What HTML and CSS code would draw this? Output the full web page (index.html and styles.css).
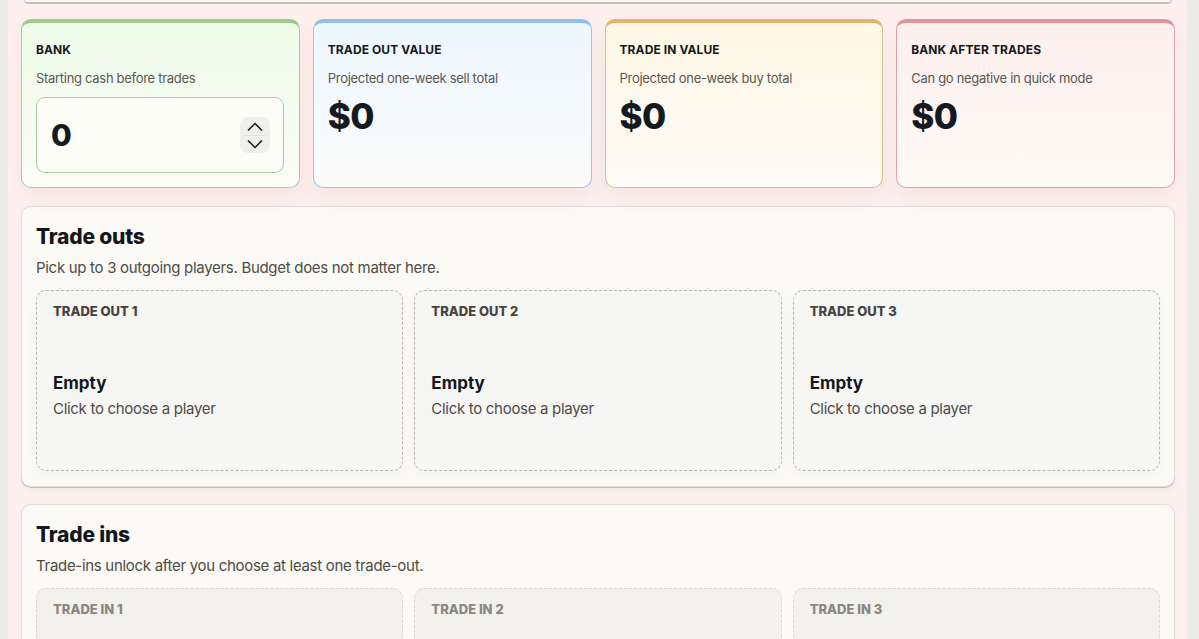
FILE: index.html
```html
<!DOCTYPE html>
<html lang="en">
<head>
<meta charset="utf-8">
<title>Trade planner</title>
<link rel="stylesheet" href="styles.css">
</head>
<body>
<div class="page">
  <div class="prev-card"></div>

  <div class="stats">
    <div class="stat stat-bank">
      <div class="stat-title">BANK</div>
      <div class="stat-sub">Starting cash before trades</div>
      <div class="bank-input">
        <span class="bank-value">0</span>
        <span class="spinner">
          <svg width="16" height="9" viewBox="0 0 16 9"><path d="M1.5 8 L8 1.5 L14.5 8" fill="none" stroke="#1f2228" stroke-width="1.7" stroke-linecap="round" stroke-linejoin="round"/></svg>
          <span class="spin-div"></span>
          <svg width="16" height="9" viewBox="0 0 16 9"><path d="M1.5 1 L8 7.5 L14.5 1" fill="none" stroke="#1f2228" stroke-width="1.7" stroke-linecap="round" stroke-linejoin="round"/></svg>
        </span>
      </div>
    </div>
    <div class="stat stat-out">
      <div class="stat-title">TRADE OUT VALUE</div>
      <div class="stat-sub">Projected one-week sell total</div>
      <div class="stat-value">$0</div>
    </div>
    <div class="stat stat-in">
      <div class="stat-title">TRADE IN VALUE</div>
      <div class="stat-sub">Projected one-week buy total</div>
      <div class="stat-value">$0</div>
    </div>
    <div class="stat stat-after">
      <div class="stat-title">BANK AFTER TRADES</div>
      <div class="stat-sub">Can go negative in quick mode</div>
      <div class="stat-value">$0</div>
    </div>
  </div>

  <section class="panel">
    <h2 class="panel-title">Trade outs</h2>
    <p class="panel-sub">Pick up to 3 outgoing players. Budget does not matter here.</p>
    <div class="slots">
      <div class="slot">
        <div class="slot-label">TRADE OUT 1</div>
        <div class="slot-body">
          <div class="slot-empty">Empty</div>
          <div class="slot-hint">Click to choose a player</div>
        </div>
      </div>
      <div class="slot">
        <div class="slot-label">TRADE OUT 2</div>
        <div class="slot-body">
          <div class="slot-empty">Empty</div>
          <div class="slot-hint">Click to choose a player</div>
        </div>
      </div>
      <div class="slot">
        <div class="slot-label">TRADE OUT 3</div>
        <div class="slot-body">
          <div class="slot-empty">Empty</div>
          <div class="slot-hint">Click to choose a player</div>
        </div>
      </div>
    </div>
  </section>

  <section class="panel">
    <h2 class="panel-title">Trade ins</h2>
    <p class="panel-sub">Trade-ins unlock after you choose at least one trade-out.</p>
    <div class="slots">
      <div class="slot slot-locked">
        <div class="slot-label">TRADE IN 1</div>
      </div>
      <div class="slot slot-locked">
        <div class="slot-label">TRADE IN 2</div>
      </div>
      <div class="slot slot-locked">
        <div class="slot-label">TRADE IN 3</div>
      </div>
    </div>
  </section>
</div>
</body>
</html>
```

FILE: styles.css
```css
* { box-sizing: border-box; }

html, body {
  margin: 0;
  padding: 0;
  height: 100%;
  overflow: hidden;
}

body {
  background: #ececeb;
  font-family: Inter, "Noto Sans", "Liberation Sans", sans-serif;
  color: #16181d;
}

.page {
  margin-left: 8px;
  width: 1179px;
  min-height: 100%;
  background: #fdf0ee;
  padding: 0 12px 40px 13px;
}

.prev-card {
  height: 4px;
  margin: 0 3px;
  background: #fbfaf6;
  border: 1px solid #d9d3cc;
  border-top: none;
  border-bottom: 2px solid #c6c0b8;
  border-radius: 0 0 10px 10px;
}

.stats {
  display: grid;
  grid-template-columns: repeat(4, 1fr);
  gap: 13px;
  margin-top: 15px;
}

.stat {
  border-radius: 10px;
  border: 1px solid;
  border-top-width: 4px;
  padding: 19px 15px 14px 14px;
  box-shadow: 0 10px 22px rgba(120, 70, 60, 0.06);
}

.stat-bank {
  border-color: #a7cf98;
  border-top-color: #9ccb8b;
  background: linear-gradient(180deg, #effcea 0%, #fbfcf6 100%);
}
.stat-out {
  border-color: #9ec6ec;
  border-top-color: #90bde9;
  background: linear-gradient(180deg, #eef7ff 0%, #fbfbf9 100%);
}
.stat-in {
  border-color: #e1be8a;
  border-top-color: #e2b46d;
  background: linear-gradient(180deg, #fff8e5 0%, #fdfbf6 100%);
}
.stat-after {
  border-color: #dea2a6;
  border-top-color: #e0959a;
  background: linear-gradient(180deg, #fdf0ee 0%, #fdfaf6 100%);
}

.stat-title {
  font-size: 12px;
  line-height: 16px;
  font-weight: 700;
  letter-spacing: 0.1px;
  color: #16181d;
}

.stat-sub {
  margin-top: 11px;
  font-size: 13px;
  line-height: 18px;
  letter-spacing: -0.3px;
  color: #5b5752;
}

.stat-value {
  margin-top: 9px;
  font-size: 35px;
  line-height: 40px;
  font-weight: 800;
  letter-spacing: -0.5px;
  color: #151a22;
}

.bank-input {
  margin-top: 10px;
  height: 76px;
  border: 1px solid #a9cf9b;
  border-radius: 9px;
  background: #fdfdf8;
  display: flex;
  align-items: center;
  justify-content: space-between;
  padding: 0 13px 0 14px;
}

.bank-value {
  font-size: 30px;
  font-weight: 800;
  color: #151a22;
}

.spinner {
  width: 30px;
  height: 36px;
  border-radius: 8px;
  background: #efefec;
  display: flex;
  flex-direction: column;
  align-items: center;
  justify-content: center;
  gap: 4px;
}

.spin-div {
  width: 22px;
  height: 1px;
  background: #e0dfdb;
}

.panel {
  margin-top: 18px;
  background: #fbfaf6;
  border: 1px solid #e3ded8;
  border-radius: 10px;
  padding: 17px 14px 15px 14px;
  box-shadow: 0 1px 0 #c4beb6, 0 3px 8px rgba(0, 0, 0, 0.05);
}

.panel + .panel {
  margin-top: 17px;
}

.panel-title {
  margin: 0;
  font-size: 21px;
  line-height: 26px;
  font-weight: 800;
  letter-spacing: -0.2px;
  color: #14161c;
}

.panel-sub {
  margin: 8px 0 0;
  font-size: 15px;
  line-height: 20px;
  letter-spacing: -0.3px;
  color: #4f4b47;
}

.slots {
  margin-top: 12px;
  display: grid;
  grid-template-columns: repeat(3, 1fr);
  gap: 11px;
}

.slot {
  height: 181px;
  border: 1px dashed #b9b5b0;
  border-radius: 10px;
  background: #f6f6f4;
  padding: 11px 16px;
  box-shadow: 0 6px 14px rgba(0, 0, 0, 0.03);
}

.slot-label {
  font-size: 13px;
  line-height: 18px;
  font-weight: 800;
  color: #48433e;
}

.slot-body {
  margin-top: 52px;
}

.slot-empty {
  font-size: 17px;
  line-height: 22px;
  font-weight: 700;
  color: #15171c;
}

.slot-hint {
  margin-top: 5px;
  font-size: 15px;
  line-height: 20px;
  letter-spacing: -0.3px;
  color: #4f4b47;
}

.slot-locked {
  background: #f2f1ee;
  border-color: #dcd8d2;
  box-shadow: none;
}

.slot-locked .slot-label {
  color: #8a8680;
}
```
